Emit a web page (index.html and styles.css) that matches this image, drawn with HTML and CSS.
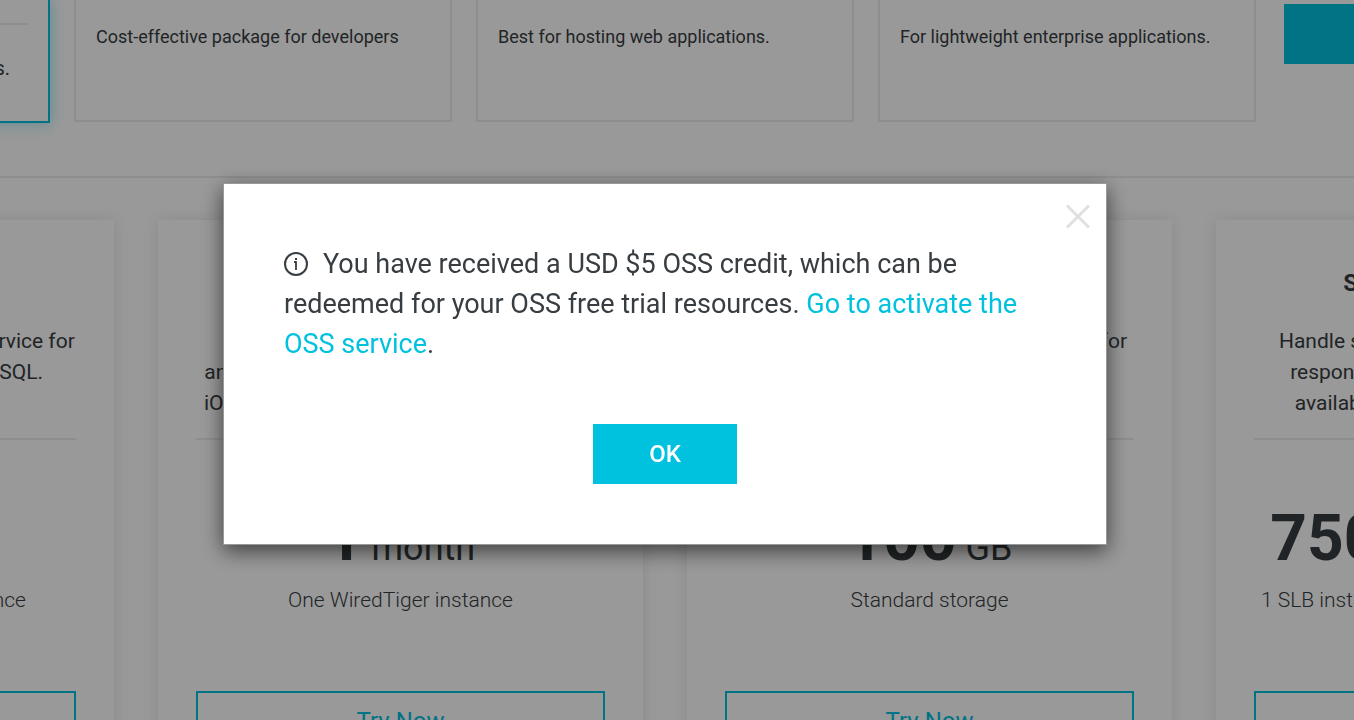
FILE: index.html
```
<!DOCTYPE html>
<html lang="en">
<head>
  <meta charset="UTF-8">
  <meta name="viewport" content="width=device-width, initial-scale=1.0">
  <title>Free Trial</title>
  <link rel="stylesheet" href="styles.css">
</head>
<body>
  <main class="page">
    <section class="packages">
      <div class="package active">
        <hr>
        <p>Best for personal sites and blogs.</p>
      </div>
      <div class="package">
        <p>Cost-effective package for developers</p>
      </div>
      <div class="package">
        <p>Best for hosting web applications.</p>
      </div>
      <div class="package">
        <p>For lightweight enterprise applications.</p>
      </div>
      <button class="buy-btn" type="button" aria-label="Get started"></button>
    </section>

    <section class="products">
      <div class="product">
        <h3>ApsaraDB for RDS</h3>
        <p class="desc">An on-demand database hosting service for<br>MySQL, SQL Server, and PostgreSQL.</p>
        <hr>
        <div class="amount"><strong>1</strong> month</div>
        <p class="detail">One high-availability SQL instance</p>
        <button class="try-btn" type="button">Try Now</button>
      </div>
      <div class="product">
        <h3>ApsaraDB for MongoDB</h3>
        <p class="desc">A secure and reliable database<br>and elastic document storage for web and<br>iOS applications, with very flexible scaling.</p>
        <hr>
        <div class="amount"><strong>1</strong> month</div>
        <p class="detail">One WiredTiger instance</p>
        <button class="try-btn" type="button">Try Now</button>
      </div>
      <div class="product">
        <h3>Object Storage Service</h3>
        <p class="desc">An encrypted and secure cloud storage for<br>all kinds of data.</p>
        <hr>
        <div class="amount"><strong>100</strong> GB</div>
        <p class="detail">Standard storage</p>
        <button class="try-btn" type="button">Try Now</button>
      </div>
      <div class="product">
        <h3>Server Load Balancer</h3>
        <p class="desc">Handle sudden traffic spikes, minimize<br>response times, and maintain a high<br>availability of all your web services.</p>
        <hr>
        <div class="amount"><strong>750</strong> hours (1 month)</div>
        <p class="detail">1 SLB instance and 150 GB of data transfer</p>
        <button class="try-btn" type="button">Try Now</button>
      </div>
    </section>
  </main>

  <!-- Credit Modal -->
  <div id="creditModal" class="modal">
    <div class="modal-content" role="dialog" aria-modal="true" aria-labelledby="creditText">
      <button class="close" type="button" aria-label="Close" onclick="closeModal()">
        <svg width="26" height="26" viewBox="0 0 26 26" fill="none" stroke="#e0e0e0" stroke-width="3">
          <path d="M2 2.5l22 22M24 2.5L2 24.5"/>
        </svg>
      </button>
      <p id="creditText" class="message">
        <svg class="info" width="24" height="24" viewBox="0 0 24 24" fill="none" stroke="#373d41">
          <circle cx="12" cy="12" r="11" stroke-width="2"/>
          <path d="M10 10h2.5M12 9.3v8.7" stroke-width="1.8"/>
          <path d="M11 7h2" stroke-width="2"/>
        </svg>You have received a USD $5 OSS credit, which can be redeemed for your OSS free trial resources. <a href="#">Go to activate the OSS service</a>.
      </p>
      <button class="btn-primary" type="button" onclick="closeModal()">OK</button>
    </div>
  </div>

  <script>
    function closeModal() {
      document.getElementById('creditModal').style.display = 'none';
      document.body.style.overflowY = 'auto';
    }
  </script>
</body>
</html>
```
FILE: styles.css
```
* {
  box-sizing: border-box;
}
body {
  font-family: Roboto, sans-serif;
  margin: 0;
  height: 100vh;
  overflow: hidden;
  background: #fff;
  color: #373d41;
}
p, h3 {
  margin: 0;
}
button {
  font-family: inherit;
  cursor: pointer;
}
hr {
  height: 2px;
  margin: 0;
  border: none;
  background: #ebecec;
}

/* Packages */
.packages {
  display: flex;
  align-items: flex-start;
  justify-content: center;
  gap: 24px;
  padding: 0 24px 53px 0;
  border-bottom: 2px solid #ebecec;
}
.package {
  flex: 0 0 378px;
  height: 122px;
  padding: 22px 20px;
  border: 2px solid #ebecec;
  border-top: none;
  font-size: 18px;
  line-height: 30px;
}
.package.active {
  height: 123px;
  padding-top: 23px;
  border-color: #00c1de;
  box-shadow: 0 0 15px rgba(0, 193, 222, 0.4);
}
.package.active p {
  margin-top: 28px;
  font-size: 20px;
  text-align: right;
  padding-right: 18px;
}
.buy-btn {
  flex: 0 0 374px;
  height: 60px;
  margin-top: 4px;
  margin-left: 4px;
  border: none;
  background: #00c1de;
}

/* Products */
.products {
  display: flex;
  justify-content: center;
  gap: 44px;
  padding: 42px 24px 60px 0;
}
.product {
  flex: 0 0 485px;
  padding: 48px 38px;
  background: #fff;
  box-shadow: 0 0 15px rgba(0, 0, 0, 0.1);
  text-align: center;
}
.product h3 {
  font-size: 24px;
  line-height: 30px;
  margin-bottom: 28px;
}
.desc {
  height: 93px;
  margin-bottom: 19px;
  font-size: 21px;
  line-height: 31px;
  white-space: nowrap;
}
.amount {
  margin: 64px 0 2px;
  font-size: 36px;
  line-height: 70px;
  white-space: nowrap;
}
.amount strong {
  font-size: 64px;
}
.detail {
  margin-bottom: 76px;
  font-size: 21px;
  font-weight: 300;
  line-height: 30px;
  white-space: nowrap;
}
.try-btn {
  width: 100%;
  height: 60px;
  border: 2px solid #00c1de;
  background: #fff;
  color: #00c1de;
  font-size: 24px;
}

/* Modal */
.modal {
  display: flex;
  align-items: center;
  justify-content: center;
  position: fixed;
  z-index: 1;
  left: 0;
  top: 0;
  width: 100%;
  height: 100%;
  padding: 8px 24px 0 0;
  background: rgba(0, 0, 0, 0.4);
}
.modal-content {
  position: relative;
  width: 90%;
  max-width: 884px;
  padding: 60px;
  border: 1px solid #999;
  background: #fff;
  box-shadow: 0 6px 20px rgba(0, 0, 0, 0.6);
  text-align: center;
}
.close {
  position: absolute;
  top: 19px;
  right: 15px;
  padding: 0;
  border: none;
  background: none;
}
.close svg {
  display: block;
}
.message {
  font-size: 27px;
  line-height: 40px;
  text-align: left;
}
.message a {
  color: #00c1de;
  text-decoration: none;
}
.info {
  margin-right: 15px;
  vertical-align: -3px;
}
.btn-primary {
  width: 144px;
  height: 60px;
  margin-top: 60px;
  border: none;
  background: #00c1de;
  color: #fff;
  font-size: 24px;
  font-weight: 500;
}
```
